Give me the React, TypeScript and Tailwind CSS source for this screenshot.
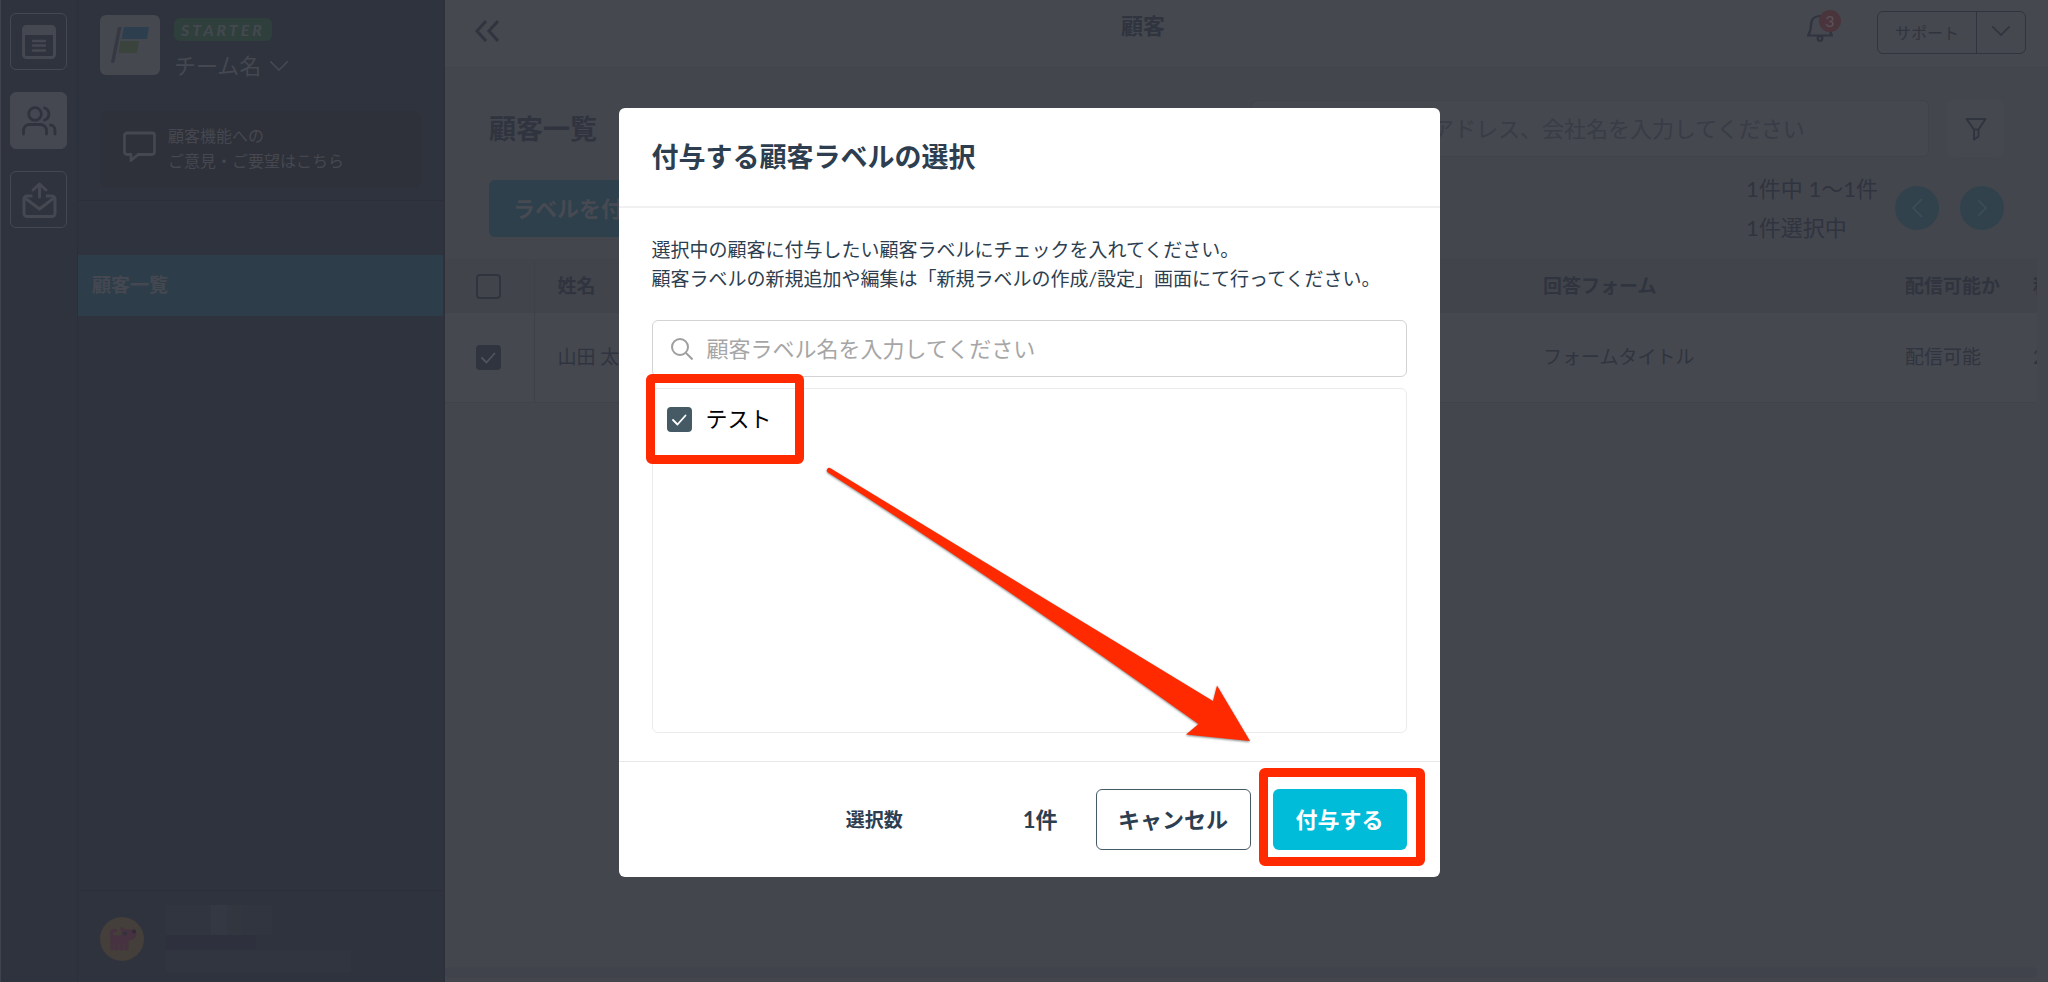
import { useState } from "react";

const table = {
  heads: ["姓名", "回答フォーム", "配信可能か", "種別"],
  row: ["山田 太郎", "フォームタイトル", "配信可能", "2023/01/01"],
};

const focusRing = "focus-visible:outline-2 focus-visible:outline-sky-500";

function Check({ className }: { className: string }) {
  return (
    <svg viewBox="0 0 24 24" className={`pointer-events-none absolute inset-0 size-6 ${className}`} fill="none" stroke="currentColor" strokeWidth="1.8" strokeLinecap="round" strokeLinejoin="round">
      <path d="M6 13l4.5 4.5L18.500 8.500" />
    </svg>
  );
}

function Chevron({ className, d = "M2 2l9 9 9-9" }: { className: string; d?: string }) {
  return (
    <svg viewBox="0 0 22 13" className={className} fill="none" stroke="currentColor" strokeWidth="1.8" strokeLinecap="round">
      <path d={d} />
    </svg>
  );
}

function Rail() {
  const box = `flex size-[57px] items-center justify-center rounded-md border ${focusRing}`;
  return (
    <nav aria-label="メイン" className="flex w-[78px] shrink-0 flex-col gap-[22px] border-r border-l border-r-[#2c2f39] border-l-[#40434d] pt-[13px] pl-[9px] text-[#454850]">
      <button aria-label="フォーム" className={`${box} border-[#454850]`}>
        <svg viewBox="0 0 36 36" className="size-9" fill="none" stroke="currentColor" strokeWidth="3" strokeLinecap="round">
          <rect x="2.500" y="2.500" width="31" height="31" rx="3" />
          <path d="M2 3h32v8H2z" fill="currentColor" stroke="none" />
          <path d="M12 17h12M12 21.500h12M12 26.500h12" strokeWidth="2.400" />
        </svg>
      </button>
      <button aria-label="顧客" className={`${box} border-[#454850] bg-[#454850] text-[#2f333e]`}>
        <svg viewBox="0 0 36 32" className="h-8 w-9" fill="none" stroke="currentColor" strokeWidth="2.800" strokeLinecap="round">
          <circle cx="14" cy="9" r="6.300" />
          <path d="M2.500 29v-3.500a6 6 0 0 1 6-6h11a6 6 0 0 1 6 6V29" />
          <path d="M23.500 3a6.300 6.300 0 0 1 0 12M29.500 20a5 5 0 0 1 4.500 5v4" />
        </svg>
      </button>
      <button aria-label="配信" className={`${box} border-[#454850]`}>
        <svg viewBox="0 0 36 38" className="h-[38px] w-9" fill="none" stroke="currentColor" strokeWidth="3" strokeLinecap="round" strokeLinejoin="round">
          <path d="M11.500 15H6a3 3 0 0 0-3 3v14.500a3 3 0 0 0 3 3h25a3 3 0 0 0 3-3V18a3 3 0 0 0-3-3h-6" strokeLinecap="butt" />
          <path d="M4 17l14.500 11L33 17M18.500 16V3.500M12 9l6.500-6 6.500 6" />
        </svg>
      </button>
    </nav>
  );
}

function Sidebar() {
  return (
    <aside className="flex w-[367px] shrink-0 flex-col border-r-2 border-[#2e313b] text-[#454850]">
      <div className="flex gap-[14px] px-[22px] pt-[15px]">
        <div className="flex size-[60px] items-center justify-center rounded-md bg-[#45484f]">
          <svg viewBox="0 0 60 60" className="size-[60px]">
            <path d="M18 12h3.500L14.500 47a2 2 0 0 1-3.500 0z" fill="#363944" />
            <path d="M24 12h25l-2 12H21.500z" fill="#2d3f4e" />
            <path d="M20.500 26h18.500l-2 12H18.500z" fill="#3a443c" />
          </svg>
        </div>
        <div className="pt-[3px]">
          <div className="flex h-[23px] w-[98px] items-center justify-center rounded-md bg-[#2f403c] text-base leading-none font-bold tracking-[3px] italic">
            STARTER
          </div>
          <button className={`mt-[9px] flex items-center gap-2 text-[22px] leading-8 ${focusRing}`}>
            チーム名
            <Chevron className="h-3 w-5" />
          </button>
        </div>
      </div>
      <a href="#feedback" className={`mx-[22px] mt-[29px] flex h-[77px] items-center gap-3 rounded-lg bg-[#2e3139] pb-1 pl-[23px] text-base leading-[25px] ${focusRing}`}>
        <svg viewBox="0 0 33 33" className="size-[33px]" fill="none" stroke="currentColor" strokeWidth="2.800" strokeLinejoin="round">
          <path d="M4 2h25a2.500 2.500 0 0 1 2.500 2.500V21a2.500 2.500 0 0 1-2.500 2.500H15L8 29.500v-6H4A2.500 2.500 0 0 1 1.500 21V4.500A2.500 2.500 0 0 1 4 2z" />
        </svg>
        <span>
          顧客機能への
          <br />
          ご意見・ご要望はこちら
        </span>
      </a>
      <div className="mt-3 border-t border-[#2c2f39] pt-[54px]">
        <a href="#customers" aria-current="page" className={`flex h-[61px] items-center bg-[#2d3e4a] pl-[14px] text-[19px] font-bold ${focusRing}`}>
          顧客一覧
        </a>
      </div>
      <div className="mt-auto flex h-[92px] items-center gap-[22px] border-t border-[#2c2f39] px-[22px] pt-1">
        <svg viewBox="0 0 44 44" className="size-11">
          <circle cx="22" cy="22" r="22" fill="#443f3a" />
          <path d="M11 33V19h11l-1-9 4 3h8q3 0 3 4 0 5-8 6v10h-3v-6h-2v6h-3v-6h-2v6h-3v-6h-2v6z" fill="#463240" stroke="#463240" strokeLinejoin="round" />
          <path d="M11.500 20v-4a3 3 0 0 1 4-2.500" fill="none" stroke="#463240" strokeWidth="3" strokeLinecap="round" />
          <circle cx="25" cy="16.500" r="1.800" fill="#2d3340" />
          <circle cx="34" cy="14.500" r="2" fill="#33293a" />
        </svg>
        <div className="flex flex-col">
          <div className="flex">
            <span className="h-[30px] w-[45px] bg-[#31353f]" />
            <span className="h-[30px] w-[16px] bg-[#343842]" />
            <span className="h-[30px] w-[15px] bg-[#32363f]" />
            <span className="h-[30px] w-[30px] bg-[#31353f]" />
          </div>
          <span className="h-[15px] w-[90px] bg-[#2e313d]" />
          <span className="h-[22px] w-[185px] bg-[#31353f]" />
        </div>
      </div>
    </aside>
  );
}

function TopBar() {
  return (
    <header className="flex h-[68px] shrink-0 items-start justify-between border-b border-[#41444b] bg-[#45484f] pr-[22px] pl-[29px]">
      <button aria-label="メニューを閉じる" className={`mt-[19px] ${focusRing}`}>
        <svg viewBox="0 0 26 24" className="h-6 w-[26px]" fill="none" stroke="currentColor" strokeWidth="3">
          <path d="M12 2L3 12l9 10M24 2l-9 10 9 10" />
        </svg>
      </button>
      <h1 className="-ml-5 pt-[10px] text-[22px] leading-8 font-bold">顧客</h1>
      <div className="flex items-start">
        <button aria-label="お知らせ 3件" className={`relative mt-3 mr-[43px] ${focusRing}`}>
          <svg viewBox="0 0 28 30" className="h-[30px] w-7" fill="none" stroke="currentColor" strokeWidth="2.200">
            <path d="M2 23.500h24c-2-3-3-5-3-10.500 0-6-3.500-9-9-9s-9 3-9 9c0 5.500-1 7.500-3 10.500z" strokeLinejoin="round" />
            <circle cx="14" cy="26.500" r="2.300" />
          </svg>
          <span className="absolute -top-[2px] left-[13px] flex size-[22px] items-center justify-center rounded-full bg-[#4b353d] text-base text-[#5a525b]">3</span>
        </button>
        <div className="mt-[11px] flex h-[43px] rounded-md border border-[#30343f]">
          <button className={`w-[99px] border-r border-[#30343f] text-base ${focusRing}`}>サポート</button>
          <button aria-label="サポートメニュー" className={`flex w-12 items-center justify-center pb-1 ${focusRing}`}>
            <Chevron className="h-3 w-5" />
          </button>
        </div>
      </div>
    </header>
  );
}

function CustomerPage() {
  return (
    <main className="flex min-w-0 flex-1 flex-col bg-[#43464d] text-[#30343f]">
      <TopBar />
      <div className="flex items-center pt-8 pr-11 pl-11">
        <h2 className="text-[27px] leading-[57px] font-bold">顧客一覧</h2>
        <input aria-label="顧客を検索" placeholder="氏名、メールアドレス、会社名を入力してください" className="mr-[18px] ml-auto h-[57px] w-[678px] rounded-md border border-[#40434a] bg-[#45484f] pl-[48px] text-[22px] placeholder:text-[#383c46]" />
        <button aria-label="絞り込み" className={`flex size-[57px] items-center justify-center rounded-md bg-[#45484f] ${focusRing}`}>
          <svg viewBox="0 0 22 24" className="h-6 w-[22px]" fill="none" stroke="currentColor" strokeWidth="2" strokeLinejoin="round">
            <path d="M1.500 2h19l-7 10.500v7L9 22.500v-10zM9 12.500h4.500" />
          </svg>
        </button>
      </div>
      <div className="flex h-[102px] items-center pr-11 pl-11">
        <button className={`h-[57px] rounded-md bg-[#2d404b] px-6 text-[22px] font-bold text-[#474a52] ${focusRing}`}>ラベルを付与する</button>
        <div className="ml-auto text-[22px] leading-[39px]">
          <p>1件中 1〜1件</p>
          <p>1件選択中</p>
        </div>
        <button aria-label="前へ" className={`ml-[17px] flex size-11 items-center justify-center rounded-full bg-[#31424d] text-[#3d4b56] ${focusRing}`}>
          <svg viewBox="0 0 12 20" className="h-5 w-3" fill="none" stroke="currentColor" strokeWidth="1.800"><path d="M11 1L2 10l9 9" /></svg>
        </button>
        <button aria-label="次へ" className={`ml-[21px] flex size-11 items-center justify-center rounded-full bg-[#31424d] text-[#3d4b56] ${focusRing}`}>
          <svg viewBox="0 0 12 20" className="h-5 w-3" fill="none" stroke="currentColor" strokeWidth="1.800"><path d="M2 2l8 8-8 8" /></svg>
        </button>
      </div>
      <div className="mr-[11px] overflow-hidden">
        <table className="w-full table-fixed text-left text-[19px] whitespace-nowrap">
          <colgroup>
            <col className="w-[89px]" />
            <col />
            <col className="w-[362px]" />
            <col className="w-[128px]" />
            <col className="w-[27px]" />
          </colgroup>
          <thead>
            <tr className="h-[54px] bg-[#41444b]">
              <th className="border-r border-[#3e4149] pl-[31px]">
                <input type="checkbox" aria-label="すべて選択" className="block size-[25px] appearance-none rounded-sm border-2 border-[#30343f]" />
              </th>
              {table.heads.map((h) => (
                <th key={h} className="overflow-hidden pl-[23px] font-bold">{h}</th>
              ))}
            </tr>
          </thead>
          <tbody>
            <tr className="h-[89px] border-b border-[#40434a] bg-[#45484f]">
              <td className="border-r border-[#3e4149] pl-[31px]">
                <span className="relative block size-[25px]">
                  <input type="checkbox" aria-label="山田 太郎を選択" defaultChecked className="block size-[25px] appearance-none rounded-sm bg-[#30343f]" />
                  <Check className="text-[#50545d]" />
                </span>
              </td>
              {table.row.map((c) => (
                <td key={c} className="overflow-hidden pl-[23px]">{c}</td>
              ))}
            </tr>
          </tbody>
        </table>
      </div>
      <div className="mt-auto mr-[11px] mb-1 h-[11px] rounded-full bg-[#40434b]" />
    </main>
  );
}

function LabelDialog() {
  const [checked, setChecked] = useState(true);

  return (
    <div role="dialog" aria-modal="true" aria-labelledby="dialog-title" className="relative w-[821px] rounded-md bg-white text-[#2c3e50]">
      <div className="border-b-2 border-[#f0f0f0] px-[33px] pt-[29px] pb-[29px]">
        <h2 id="dialog-title" className="text-[27px] leading-10 font-bold">付与する顧客ラベルの選択</h2>
      </div>
      <div className="px-[33px] pt-[27px] pb-7">
        <p className="text-[19px] leading-[29px]">
          選択中の顧客に付与したい顧客ラベルにチェックを入れてください。
          <br />
          顧客ラベルの新規追加や編集は「新規ラベルの作成/設定」画面にて行ってください。
        </p>
        <label className="mt-[27px] flex h-[57px] items-center rounded-md border border-[#d3d3d3] pl-[18px]">
          <svg viewBox="0 0 22 22" className="size-[22px] shrink-0" fill="none" stroke="#9e9e9e" strokeWidth="2">
            <circle cx="9" cy="9" r="8" />
            <path d="M15 15l6.500 6.500" />
          </svg>
          <input aria-label="顧客ラベル名" placeholder="顧客ラベル名を入力してください" className="ml-[14px] h-full min-w-0 flex-1 text-[22px] outline-none placeholder:text-[#a6a6a6]" />
        </label>
        <div className="mt-[11px] h-[345px] rounded-md border border-[#ebebeb] px-[14px] pt-[14px]">
          <label className="flex w-fit items-center gap-[14px] text-[22px] leading-8 text-black">
            <span className="relative block size-[25px]">
              <input type="checkbox" checked={checked} onChange={(e) => setChecked(e.target.checked)} className="block size-[25px] appearance-none rounded-sm border-2 border-[#455a64] checked:bg-[#455a64]" />
              <Check className="text-white" />
            </span>
            テスト
          </label>
        </div>
      </div>
      <div className="flex items-center justify-end border-t border-[#e8e8e8] px-[33px] py-[27px] text-[22px] font-bold">
        <span className="mr-[120px] text-[19px] leading-8">選択数</span>
        <span className="mr-[38px] leading-8">{checked ? 1 : 0}件</span>
        <button className={`h-[61px] w-[155px] rounded-md border border-[#455a64] ${focusRing}`}>キャンセル</button>
        <button className={`ml-[22px] h-[61px] w-[134px] rounded-md bg-[#00bcd9] text-white ${focusRing}`}>付与する</button>
      </div>

      {/* step markers */}
      <div className="pointer-events-none absolute top-[266px] left-[27px] h-[90px] w-[158px] rounded-md border-[9px] border-[#ff2a00]" />
      <div className="pointer-events-none absolute right-[15px] bottom-[11px] h-[98px] w-[166px] rounded-md border-[9px] border-[#ff2a00]" />
      <svg viewBox="0 0 430 280" className="pointer-events-none absolute top-[359px] left-[205px] h-[280px] w-[430px] drop-shadow-[0_1px_1px_rgba(0,0,0,0.500)]">
        <path d="M6.500 1.300L389 234l4-15.500L426 274l-64-6.500L374.500 257Q180 118 4 5.500A2.400 2.400 0 0 1 6.500 1.300z" fill="#ff2a00" />
      </svg>
    </div>
  );
}

export default function App() {
  return (
    <div lang="ja" className="relative flex min-h-screen bg-[#2f333e] font-[Lato,'Noto_Sans_CJK_JP',sans-serif]">
      <Rail />
      <Sidebar />
      <CustomerPage />
      <div className="fixed inset-0 flex items-start justify-center overflow-auto pt-[108px] pl-[10px]">
        <LabelDialog />
      </div>
    </div>
  );
}
